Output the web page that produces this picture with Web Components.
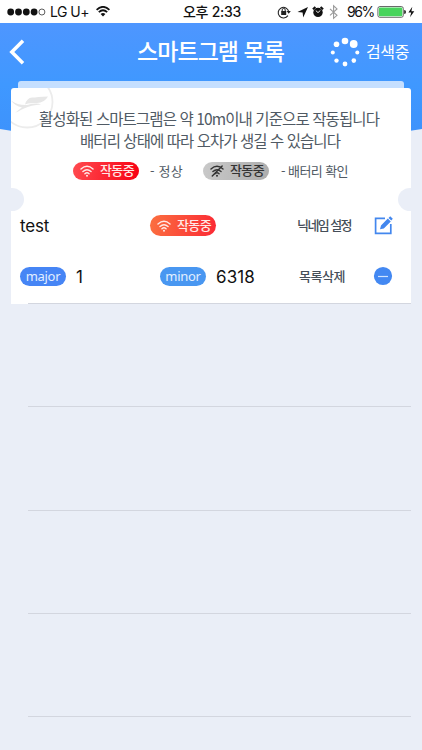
<!DOCTYPE html>
<html lang="ko">
<head>
<meta charset="utf-8">
<title>스마트그램 목록</title>
<style>
html,body{margin:0;height:100%}
body{background:#eaeef7;font-family:"Noto Sans CJK KR","Noto Sans",sans-serif;overflow:hidden}
</style>
</head>
<body>
<smartgram-page></smartgram-page>
<script>
function define(name, css, html, ready) {
  const t = document.createElement('template');
  t.innerHTML = `<style>*{box-sizing:border-box}svg{display:block}${css}</style>${html}`;
  customElements.define(name, class extends HTMLElement {
    connectedCallback() {
      if (this.shadowRoot) return;
      this.attachShadow({mode: 'open'}).append(t.content.cloneNode(true));
      if (ready) ready(this, this.shadowRoot);
    }
  });
}

/* One line of text whose letter spacing is adjusted to fill the width in "w". */
define('fit-text', `:host{display:block;white-space:nowrap;flex:none}span{display:inline-block}`, `<span><slot></slot></span>`, (el, root) => {
  const w = +el.getAttribute('w'), s = root.querySelector('span');
  el.style.width = w + 'px';
  const n = el.textContent.length;
  s.style.letterSpacing = (w - s.getBoundingClientRect().width) / n + 'px';
});

define('wifi-icon', `:host{display:block;flex:none;width:16px;height:14px}svg{width:100%;height:100%}.slash{display:none}:host([off]) .slash{display:block}`,
`<svg viewBox="0 0 16 14" fill="none" stroke="currentColor" stroke-width="1.7" stroke-linecap="round">
<path d="M1 4.6Q8-1.6 15 4.6M3.3 7.6Q8 3.4 12.7 7.6M5.6 10.2Q8 8 10.4 10.2"/><circle cx="8" cy="12.5" r="1.2" fill="currentColor" stroke="none"/>
<path class="slash" d="M2.5 12.8 14 1.2"/></svg>`);

define('status-bar', `
:host{display:flex;height:23px;align-items:center;background:#fff;color:#111;font:14px/22px Inter,"Liberation Sans","Noto Sans CJK KR",sans-serif;padding-left:7px}
.time{margin-left:73px;font-weight:500;font-size:14px}.carrier{margin-left:4px}.wifi{margin-left:7px}
.right{margin-left:36px}.pct{margin-left:4px}.bat{margin-left:3px}svg{flex:none}`,
`<svg width="39" height="8"><g fill="#111"><circle cx="3.7" cy="4" r="3.4"/><circle cx="11.5" cy="4" r="3.4"/><circle cx="19.3" cy="4" r="3.4"/><circle cx="27.1" cy="4" r="3.4"/></g><circle cx="34.9" cy="4" r="3" fill="none" stroke="#333" stroke-width=".8"/></svg>
<fit-text class="carrier" w="39">LG U+</fit-text>
<svg class="wifi" width="14" height="11" viewBox="0 0 14 11"><path d="M.6 3.8Q7-2.1 13.4 3.8M2.8 6.2Q7 2.4 11.2 6.2" fill="none" stroke="#111" stroke-width="1.8"/><path d="M4.6 8Q7 6 9.4 8L7 10.6z" fill="#111"/></svg>
<fit-text class="time" w="58">오후 2:33</fit-text>
<svg class="right" width="66" height="16" viewBox="0 0 66 16">
<g fill="none" stroke="#222"><path d="M10.9 11.6a5.3 5.3 0 1 1 .8-4" stroke-width="1.1"/><path d="M5.2 7.5V5.9a1.5 1.5 0 0 1 3 0v1.6"/></g><path d="M4.2 7h5v4h-5zM9.6 7h4.2l-2.1 2.7z" fill="#222"/>
<path d="M20.5 8 31 3l-4.8 10.5-.6-5.1z" fill="#111"/>
<g transform="translate(-3)"><circle cx="44" cy="8.4" r="4.7" fill="#111"/><path d="M38.9 5.3 41.4 3.1M46.6 3.1l2.5 2.2" stroke="#111" stroke-width="2"/><path d="M41.8 6.6 44 8.6l2.4-2.2" fill="none" stroke="#fff" stroke-width=".9"/></g>
<path d="m53 4.9 7 6.4-3.4 3V1.8l3.4 3.1-7 6.4" fill="none" stroke="#999" stroke-width="1.1"/></svg>
<fit-text class="pct" w="27">96%</fit-text>
<svg class="bat" width="40" height="14" viewBox="0 0 40 14"><rect x=".9" y="1.5" width="25.4" height="10.8" rx="2" fill="#fff" stroke="#444" stroke-width=".8"/><rect x="1.9" y="2.5" width="23.4" height="8.8" rx="1" fill="#48d45c"/><path d="M27.2 5q1.8 0 1.8 2t-1.8 2z" fill="#222"/><path d="M35.3 1.8 31.4 7.6h2.8l-1.2 4.7 4.3-6.1h-2.9z" fill="#111"/></svg>`);

define('nav-bar', `
:host{display:flex;height:58px;align-items:center;color:#fff;padding:0 0 1px 9px}
.back{width:16px;height:26px}fit-text{line-height:36px}.title{margin:-3px 0 0 112px;font-size:23px;font-weight:500}
.spin{margin-left:46px}.search{margin:-2px 0 0 6px;font-size:16px;font-weight:400}svg{flex:none}`,
`<svg class="back" viewBox="0 0 16 26" fill="none" stroke="#fff" stroke-width="3.5"><path d="M14 1.8 2.8 13 14 24.2"/></svg>
<fit-text class="title" w="147">스마트그램 목록</fit-text>
<svg class="spin" width="30" height="30" viewBox="0 0 30 30" fill="#fff"><circle cx="15" cy="4" r="3.3"/><circle cx="23.7" cy="7" r="3.9"/><circle cx="27.3" cy="15.5" r="2"/><circle cx="23.8" cy="23.6" r="2.3"/><circle cx="15" cy="27" r="2.4"/><circle cx="6.5" cy="23.6" r="2.2"/><circle cx="2.8" cy="15.5" r="2"/><circle cx="6.5" cy="7.2" r="2.8"/></svg>
<fit-text class="search" w="43">검색중</fit-text>`);

define('state-pill', `
:host{display:flex;flex:none;width:66px;height:18px;border-radius:9px;align-items:center;padding-left:7px;gap:6px;color:#ffe9e7;background:linear-gradient(100deg,#ff4b50,#f80012);font:500 13px/18px "Noto Sans CJK KR",sans-serif}
:host([kind=orange]){height:21px;border-radius:11px;background:linear-gradient(100deg,#fb7040,#fb2934)}
:host([kind=off]){color:#333;background:linear-gradient(100deg,#c9c9c9,#adadad)}
fit-text{margin-top:-2px}wifi-icon{width:14px;height:12px}`,
`<wifi-icon></wifi-icon><fit-text w="34">작동중</fit-text>`, (el, root) => {
  if (el.getAttribute('kind') === 'off') root.querySelector('wifi-icon').setAttribute('off', '');
});

define('key-tag', `
:host{display:flex;flex:none;width:46px;height:19px;border-radius:10px;justify-content:center;background:#4685f5;color:#e2efff;font:13px/18px "Noto Sans",sans-serif;letter-spacing:-.3px}
:host([light]){background:#4997f1}`, `<slot></slot>`);

define('info-panel', `
:host{display:block;position:relative;height:112px;color:#505a64;font-size:15.5px}
.leaf{position:absolute;left:0;top:0}.copy{position:relative;padding-top:19px}
.copy fit-text{line-height:22px;margin:0 auto 0 28px}.copy fit-text+fit-text{margin-left:69px}
.legend{display:flex;align-items:center;height:20px;margin-top:10px;padding-left:62px;font-size:13px;line-height:20px}
.l1{margin-left:11px}.p2{margin-left:20px}.l2{margin-left:12px}`,
`<svg class="leaf" width="44" height="48" viewBox="0 0 44 48"><circle cx="16" cy="14" r="25.5" fill="none" stroke="#ececec" stroke-width="1.8"/><path d="M14 16.5Q16 10 21 9.6T37 8.5Q33 15.5 25 15T14 16.5zM0 12.5Q7 17.5 16 17 26 14.5 30 16.5 20 17 13 20.5T4 25Q9 20.5 11 19.5 4 18 0 12.5z" fill="#e7e7e7"/></svg>
<div class="copy"><fit-text w="340">활성화된 스마트그램은 약 10m이내 기준으로 작동됩니다</fit-text><fit-text w="260">배터리 상태에 따라 오차가 생길 수 있습니다</fit-text></div>
<div class="legend"><state-pill></state-pill><fit-text class="l1" w="33">- 정상</fit-text><state-pill class="p2" kind="off"></state-pill><fit-text class="l2" w="67">- 배터리 확인</fit-text></div>`);

define('device-item', `
:host{display:grid;grid-template-rows:51px 51px;align-items:center;color:#111;font:17px/24px Inter,sans-serif}
.row{display:flex;align-items:center}.row{padding-left:9px}
.state{margin-left:101px}.act{font:500 13px/20px "Noto Sans CJK KR",sans-serif;color:#454e58;margin-top:-2px}
.a1{margin-left:81px}.edit{margin:-1px 0 0 22px}.id{margin-left:10px}.minor{margin-left:76px}.num{margin-left:10px}
.a2{margin-left:44px}.del{margin:-1px 0 0 28px}svg{flex:none}`,
`<div class="row"><fit-text w="29">test</fit-text><state-pill class="state" kind="orange"></state-pill><fit-text class="act a1" w="54">닉네임 설정</fit-text>
<svg class="edit" width="20" height="20" viewBox="0 0 20 20" fill="none" stroke="#4387ee" stroke-width="1.7"><path d="M12 3.4H2.6v15h15.2V9"/><path d="M7 14.2 8 10.4 14.8 3.6l3 2.8-7 7zM15.5 2.9 17.2 1.2l2.6 2.5-1.5 1.9z" fill="#4387ee" stroke="none"/></svg></div>
<div class="row"><key-tag>major</key-tag><fit-text class="id" w="8">1</fit-text><key-tag class="minor" light>minor</key-tag><fit-text class="num" w="39">6318</fit-text><fit-text class="act a2" w="46">목록삭제</fit-text>
<svg class="del" width="20" height="20"><circle cx="10" cy="10" r="9.1" fill="#4388f2"/><path d="M5 10.5h10" stroke="#cfe3ff" stroke-width="1.2"/></svg></div>`);

define('ticket-card', `
:host{display:block;margin:0 11px}.back{height:7px;margin:0 7px;background:#c5dfff;border-radius:3px 3px 0 0}
.body{position:relative;height:215px;background:#fff;border-radius:3px 3px 0 0;overflow:hidden}
.notch{position:absolute;top:100px;width:24px;height:23px;border-radius:50%;background:#eaeef7}.notch.l{left:-11px}.notch.r{right:-11px}
.foot{width:17px;height:1px;background:#fff}`,
`<div class="back"></div><div class="body"><info-panel></info-panel><device-item></device-item><i class="notch l"></i><i class="notch r"></i></div><div class="foot"></div>`);

define('empty-rows', `:host{display:block;margin:-1px 11px 0 28px}div{height:103.3px;border-top:1px solid #d3d6df}`,
`<div></div><div></div><div></div><div></div><div></div>`);

define('smartgram-page', `
:host{display:block;position:relative;width:422px;height:750px;overflow:hidden;background:#eaeef7}
.blue{position:absolute;inset:23px 0 auto 0;width:422px;height:126px}
.content{position:relative}`,
`<svg class="blue" viewBox="0 0 422 126"><defs><linearGradient id="g" x2="0" y2="1"><stop stop-color="#4e96ff"/><stop offset=".5" stop-color="#3f98ff"/><stop offset="1" stop-color="#3d91fb"/></linearGradient></defs><path d="M0 0H422V106Q211 142 0 106z" fill="url(#g)"/></svg>
<div class="content"><status-bar></status-bar><nav-bar></nav-bar><ticket-card></ticket-card><empty-rows></empty-rows></div>`);
</script>
</body>
</html>
